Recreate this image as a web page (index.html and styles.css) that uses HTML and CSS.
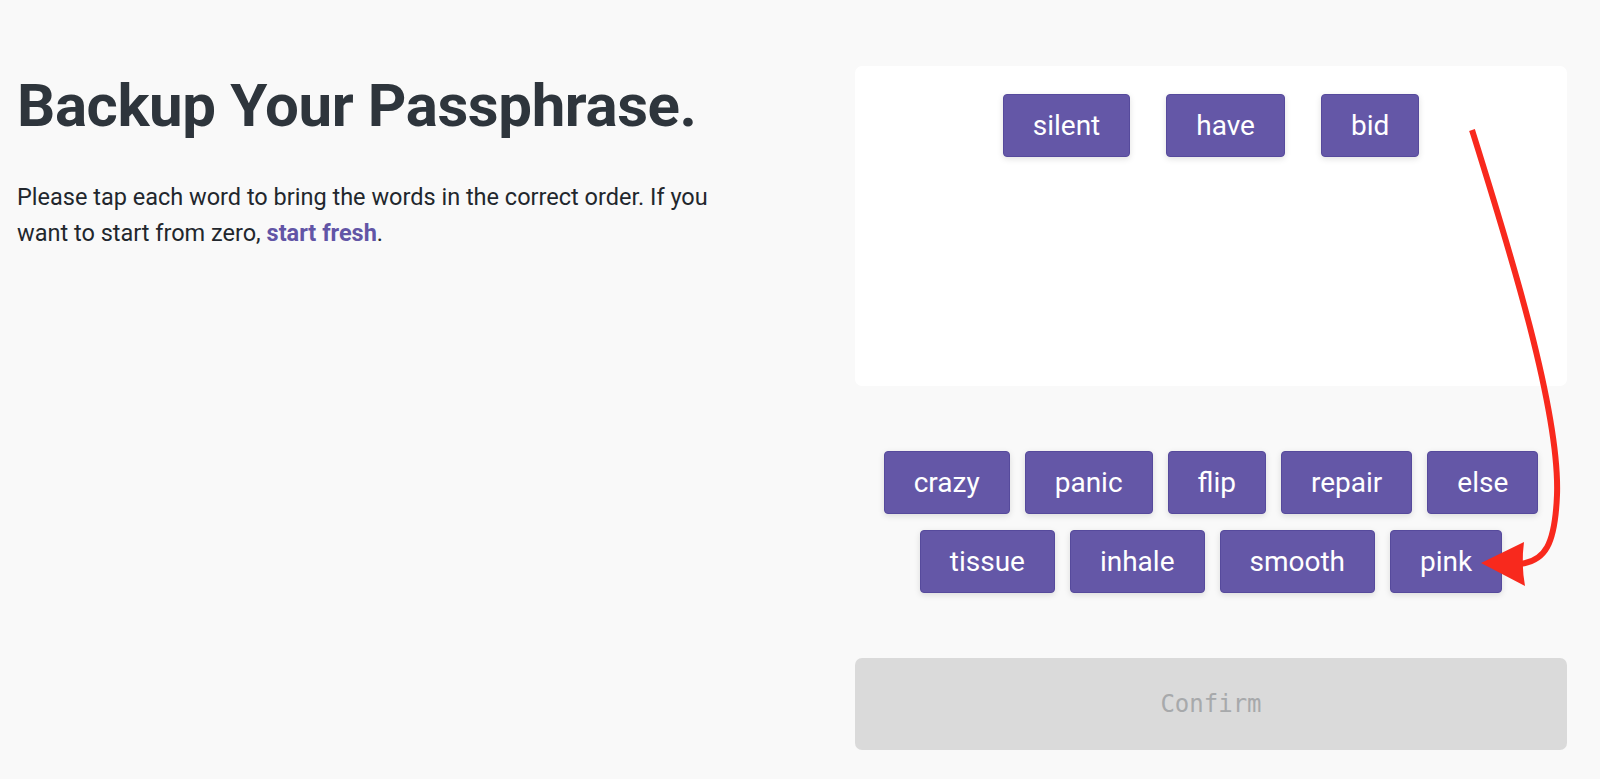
FILE: index.html
```html
<!DOCTYPE html>
<html lang="en">
<head>
<meta charset="utf-8">
<title>Backup Your Passphrase</title>
<link rel="stylesheet" href="styles.css">
</head>
<body>
<main class="page">
  <section class="intro">
    <h1 class="title">Backup Your Passphrase.</h1>
    <p class="lead">Please tap each word to bring the words in the correct order. If you want to start from zero, <a class="link" href="#">start fresh</a>.</p>
  </section>
  <section class="quiz">
    <div class="picked">
      <span class="word">silent</span>
      <span class="word">have</span>
      <span class="word">bid</span>
    </div>
    <div class="pool">
      <div class="pool-row">
        <span class="word">crazy</span>
        <span class="word">panic</span>
        <span class="word">flip</span>
        <span class="word">repair</span>
        <span class="word">else</span>
      </div>
      <div class="pool-row">
        <span class="word">tissue</span>
        <span class="word">inhale</span>
        <span class="word">smooth</span>
        <span class="word">pink</span>
      </div>
    </div>
    <button class="confirm" disabled>Confirm</button>
  </section>
  <svg class="annotation" width="1600" height="779" viewBox="0 0 1600 779" aria-hidden="true">
    <path d="M1472 130 C1508 245 1560 410 1557 495 C1555 545 1545 561 1520 564" fill="none" stroke="#f8291d" stroke-width="6" stroke-linecap="butt"/>
    <path d="M1481 563 L1524 542 Q1521 564 1525 586 Z" fill="#f8291d"/>
  </svg>
</main>
</body>
</html>
```

FILE: styles.css
```css
* { box-sizing: border-box; }

html, body {
  margin: 0;
  padding: 0;
  background: #f9f9f9;
}

body {
  font-family: Roboto, "Liberation Sans", sans-serif;
  color: #2e343b;
}

.page {
  position: relative;
  display: flex;
  justify-content: space-between;
  padding: 0 33px 0 17px;
  min-height: 779px;
}

.intro {
  width: 720px;
  padding-top: 66px;
}

.title {
  margin: 0;
  font-family: Roboto, "Liberation Sans", sans-serif;
  font-weight: 700;
  font-size: 60px;
  line-height: 80px;
  color: #2e353c;
  letter-spacing: -0.4px;
  white-space: nowrap;
}

.lead {
  margin: 33px 0 0;
  font-size: 23.5px;
  line-height: 36px;
  color: #22272d;
}

.link {
  color: #6255a6;
  font-weight: 700;
  text-decoration: none;
}

.quiz {
  width: 712px;
  padding-top: 66px;
  display: flex;
  flex-direction: column;
}

.picked {
  height: 320px;
  background: #ffffff;
  border-radius: 7px;
  padding-top: 28px;
  display: flex;
  justify-content: center;
  align-items: flex-start;
  gap: 36px;
}

.word {
  display: inline-flex;
  align-items: center;
  justify-content: center;
  height: 63px;
  padding: 0 29px;
  background: #6457a7;
  border: 1px solid #564a9c;
  border-radius: 4px;
  color: #ffffff;
  font-size: 28px;
  box-shadow: 0 2px 6px rgba(0, 0, 0, 0.12);
}

.pool {
  margin-top: 65px;
  display: flex;
  flex-direction: column;
  gap: 16px;
}

.pool-row {
  display: flex;
  justify-content: center;
  gap: 15px;
}

.confirm {
  margin-top: 65px;
  height: 92px;
  width: 100%;
  border: none;
  border-radius: 7px;
  background: #dadada;
  color: #a7a9ab;
  font-family: "DejaVu Sans Mono", "Liberation Mono", monospace;
  font-size: 24px;
}

.annotation {
  position: absolute;
  left: 0;
  top: 0;
  pointer-events: none;
}
```
